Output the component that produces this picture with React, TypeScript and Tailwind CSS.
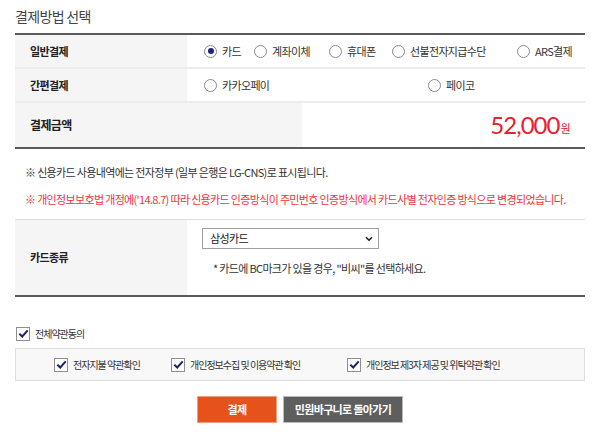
import { ChevronDown } from "lucide-react";

const font = { fontFamily: '"Noto Sans CJK KR", "Noto Sans", sans-serif' };

function Radio({ checked = false }: { checked?: boolean }) {
  return (
    <span className="flex h-[13px] w-[13px] shrink-0 items-center justify-center rounded-full border border-[#8a8a8a] bg-white">
      {checked && <span className="h-[6px] w-[6px] rounded-full bg-[#1b237a]" />}
    </span>
  );
}

function Check() {
  return (
    <span className="flex h-[14px] w-[14px] shrink-0 items-center justify-center border border-[#8f8f8f] bg-white">
      <svg viewBox="0 0 12 12" className="h-[11px] w-[11px]">
        <path d="M1.5 6.2 L4.6 9.2 L10.6 2.6" fill="none" stroke="#1b2370" strokeWidth="2.2" />
      </svg>
    </span>
  );
}

function RadioItem({ label, width, checked }: { label: string; width?: string; checked?: boolean }) {
  return (
    <label className={`flex items-center gap-[5px] ${width ?? ""}`}>
      <Radio checked={checked} />
      <span>{label}</span>
    </label>
  );
}

function CheckItem({ label, width }: { label: string; width?: string }) {
  return (
    <label className={`flex items-center gap-[5px] ${width ?? ""}`}>
      <Check />
      <span className="text-[10px] tracking-[-0.1em]">{label}</span>
    </label>
  );
}

export default function App() {
  return (
    <div className="w-[600px] h-[434px] bg-white px-[15px] text-[11px] tracking-[-0.06em] text-[#333]" style={font}>
      {/* Title */}
      <div className="flex h-[33px] items-center text-[14px] text-[#444]">결제방법 선택</div>

      {/* Payment method table */}
      <div className="border-y-2 border-[#5a5a5a]">
        <div className="grid h-[34px] grid-cols-[172px_1fr] border-b-2 border-[#ececec]">
          <div className="flex items-center bg-[#f5f5f5] pl-[15px] font-bold text-[#222]">일반결제</div>
          <div className="flex items-center pl-[17px]">
            <RadioItem label="카드" width="w-[50px]" checked />
            <RadioItem label="계좌이체" width="w-[75px]" />
            <RadioItem label="휴대폰" width="w-[63px]" />
            <RadioItem label="선불전자지급수단" width="w-[125px]" />
            <RadioItem label="ARS결제" />
          </div>
        </div>
        <div className="grid h-[34px] grid-cols-[172px_1fr] border-b-2 border-[#ececec]">
          <div className="flex items-center bg-[#f5f5f5] pl-[15px] font-bold text-[#222]">간편결제</div>
          <div className="flex items-center pl-[17px]">
            <RadioItem label="카카오페이" width="w-[224px]" />
            <RadioItem label="페이코" />
          </div>
        </div>
        <div className="grid h-[44px] grid-cols-[287px_1fr]">
          <div className="flex items-center bg-[#f5f5f5] pl-[15px] text-[12px] font-bold text-[#222]">결제금액</div>
          <div className="flex items-center justify-end pr-[15px] text-[#e8202f]">
            <span className="text-[24px] leading-none tracking-[-0.04em]" style={{ fontFamily: "Lato, sans-serif" }}>
              52,000
            </span>
            <span className="ml-[1px] mt-[6px] text-[11px]">원</span>
          </div>
        </div>
      </div>

      {/* Notes */}
      <div className="pl-[10px] pt-[15px]">
        <p className="h-[17px] leading-[17px]">※ 신용카드 사용내역에는 전자정부 (일부 은행은 LG-CNS)로 표시됩니다.</p>
        <p className="mt-[10px] h-[17px] leading-[17px] text-[#f0323c]">
          ※ 개인정보보호법 개정에('14.8.7) 따라 신용카드 인증방식이 주민번호 인증방식에서 카드사별 전자인증 방식으로 변경되었습니다.
        </p>
      </div>

      {/* Card type */}
      <div className="mt-[11px] grid h-[78px] grid-cols-[172px_1fr] border-t border-b-2 border-t-[#dcdcdc] border-b-[#5a5a5a]">
        <div className="flex items-center bg-[#f5f5f5] pl-[15px] font-bold text-[#222]">카드종류</div>
        <div className="pl-[15px] pt-[8px]">
          <div className="relative w-[177px]">
            <select
              className="h-[21px] w-full appearance-none border border-[#a0a0a0] bg-white pl-[7px] text-[11px] text-[#222] outline-none"
              style={font}
              defaultValue="삼성카드"
            >
              <option>삼성카드</option>
              <option>비씨</option>
              <option>신한카드</option>
              <option>현대카드</option>
            </select>
            <ChevronDown className="pointer-events-none absolute right-[5px] top-[6px] h-[10px] w-[10px] text-[#222]" strokeWidth={4} />
          </div>
          <p className="mt-[11px] pl-[11px]">* 카드에 BC마크가 있을 경우, "비씨"를 선택하세요.</p>
        </div>
      </div>

      {/* Terms */}
      <div className="mt-[29px] flex items-center pl-[1px]">
        <CheckItem label="전체약관동의" />
      </div>
      <div className="mt-[7px] flex h-[33px] items-center border border-[#dedede] bg-[#f8f8f8] pl-[38px]">
        <CheckItem label="전자지불 약관확인" width="w-[117px]" />
        <CheckItem label="개인정보수집 및 이용약관 확인" width="w-[176px]" />
        <CheckItem label="개인정보 제3자 제공 및 위탁약관 확인" />
      </div>

      {/* Buttons */}
      <div className="mt-[15px] flex justify-center gap-[6px]">
        <button className="h-[27px] w-[80px] border border-[#f0a080] bg-[#e5521b] text-[11px] font-bold text-white" style={font}>
          결제
        </button>
        <button className="h-[27px] w-[120px] border border-[#bbbbbb] bg-[#5e5e5e] text-[11px] font-bold text-white" style={font}>
          민원바구니로 돌아가기
        </button>
      </div>
    </div>
  );
}
